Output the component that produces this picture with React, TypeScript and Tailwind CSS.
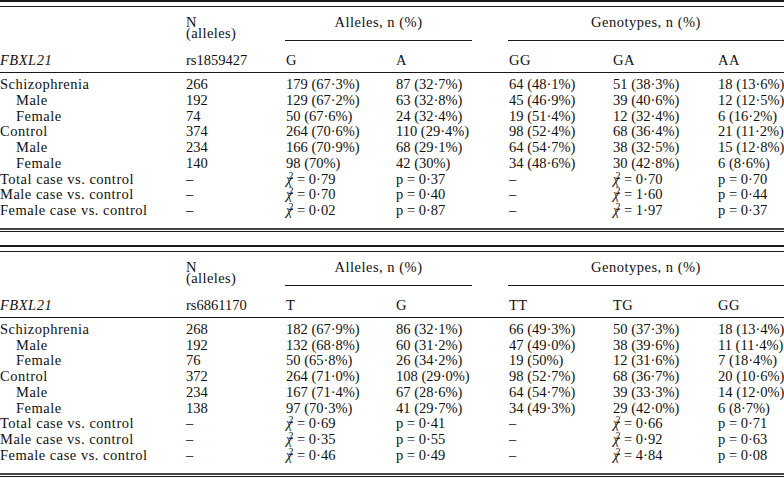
import React from "react";

type Cell = string | { chi: string };
type Row = { label: string; indent?: boolean; cells: Cell[] };

const GRID = "grid grid-cols-[186px_100px_110px_113px_104px_105px_1fr]";

function Chi({ v }: { v: string }) {
  return (
    <span>
      <span className="italic">χ</span>
      <sup className="-ml-[4px] text-[10px]">2</sup>
      <span> = {v}</span>
    </span>
  );
}

function renderCell(c: Cell) {
  if (typeof c === "string") return c;
  return <Chi v={c.chi} />;
}

function Table({
  snp,
  alleles,
  genos,
  rows,
}: {
  snp: string;
  alleles: [string, string];
  genos: [string, string, string];
  rows: Row[];
}) {
  return (
    <div className="w-[784px]">
      <div className="h-[2px] bg-[#1a1a1a]" />
      <div className="h-[4px]" />
      <div className="h-[1px] bg-[#1a1a1a]" />
      {/* header */}
      <div className="flex h-[65px]">
        <div className="flex w-[186px] flex-col justify-end pb-[3px] italic tracking-[0.5px]">FBXL21</div>
        <div className="flex flex-1 flex-col justify-between">
          <div className="flex items-start pt-[8px] tracking-[0.5px]">
            <div className="w-[100px]">
              <div>N</div>
              <div className="-mt-[5px] tracking-[0.4px]">(alleles)</div>
            </div>
            <div className="w-[223px]">
              <div className="mr-[37px] -ml-[1px] border-b border-[#1a1a1a] pb-[9px] text-center">
                Alleles, n (%)
              </div>
            </div>
            <div className="flex-1">
              <div className="-ml-[1px] border-b border-[#1a1a1a] pb-[9px] text-center">
                Genotypes, n (%)
              </div>
            </div>
          </div>
          <div className="grid grid-cols-[100px_110px_113px_104px_105px_1fr] pb-[3px] tracking-[0.5px]">
            <div className="tracking-normal">{snp}</div>
            <div>{alleles[0]}</div>
            <div>{alleles[1]}</div>
            <div>{genos[0]}</div>
            <div>{genos[1]}</div>
            <div>{genos[2]}</div>
          </div>
        </div>
      </div>
      <div className="h-[1px] bg-[#1a1a1a]" />
      {/* body */}
      <div className="pt-[4px] pb-[9px]">
        {rows.map((r, i) => (
          <div key={i} className={`${GRID} whitespace-nowrap`}>
            <div className={`tracking-[0.5px] ${r.indent ? "pl-[16px]" : ""}`}>{r.label}</div>
            {r.cells.map((c, j) => (
              <div key={j}>{renderCell(c)}</div>
            ))}
          </div>
        ))}
      </div>
      <div className="h-[2px] bg-[#444]" />
      <div className="h-[1px]" />
      <div className="h-[1px] bg-[#1a1a1a]" />
    </div>
  );
}

const rows1: Row[] = [
  { label: "Schizophrenia", cells: ["266", "179 (67·3%)", "87 (32·7%)", "64 (48·1%)", "51 (38·3%)", "18 (13·6%)"] },
  { label: "Male", indent: true, cells: ["192", "129 (67·2%)", "63 (32·8%)", "45 (46·9%)", "39 (40·6%)", "12 (12·5%)"] },
  { label: "Female", indent: true, cells: ["74", "50 (67·6%)", "24 (32·4%)", "19 (51·4%)", "12 (32·4%)", "6 (16·2%)"] },
  { label: "Control", cells: ["374", "264 (70·6%)", "110 (29·4%)", "98 (52·4%)", "68 (36·4%)", "21 (11·2%)"] },
  { label: "Male", indent: true, cells: ["234", "166 (70·9%)", "68 (29·1%)", "64 (54·7%)", "38 (32·5%)", "15 (12·8%)"] },
  { label: "Female", indent: true, cells: ["140", "98 (70%)", "42 (30%)", "34 (48·6%)", "30 (42·8%)", "6 (8·6%)"] },
  { label: "Total case vs. control", cells: ["–", { chi: "0·79" }, "p = 0·37", "–", { chi: "0·70" }, "p = 0·70"] },
  { label: "Male case vs. control", cells: ["–", { chi: "0·70" }, "p = 0·40", "–", { chi: "1·60" }, "p = 0·44"] },
  { label: "Female case vs. control", cells: ["–", { chi: "0·02" }, "p = 0·87", "–", { chi: "1·97" }, "p = 0·37"] },
];

const rows2: Row[] = [
  { label: "Schizophrenia", cells: ["268", "182 (67·9%)", "86 (32·1%)", "66 (49·3%)", "50 (37·3%)", "18 (13·4%)"] },
  { label: "Male", indent: true, cells: ["192", "132 (68·8%)", "60 (31·2%)", "47 (49·0%)", "38 (39·6%)", "11 (11·4%)"] },
  { label: "Female", indent: true, cells: ["76", "50 (65·8%)", "26 (34·2%)", "19 (50%)", "12 (31·6%)", "7 (18·4%)"] },
  { label: "Control", cells: ["372", "264 (71·0%)", "108 (29·0%)", "98 (52·7%)", "68 (36·7%)", "20 (10·6%)"] },
  { label: "Male", indent: true, cells: ["234", "167 (71·4%)", "67 (28·6%)", "64 (54·7%)", "39 (33·3%)", "14 (12·0%)"] },
  { label: "Female", indent: true, cells: ["138", "97 (70·3%)", "41 (29·7%)", "34 (49·3%)", "29 (42·0%)", "6 (8·7%)"] },
  { label: "Total case vs. control", cells: ["–", { chi: "0·69" }, "p = 0·41", "–", { chi: "0·66" }, "p = 0·71"] },
  { label: "Male case vs. control", cells: ["–", { chi: "0·35" }, "p = 0·55", "–", { chi: "0·92" }, "p = 0·63"] },
  { label: "Female case vs. control", cells: ["–", { chi: "0·46" }, "p = 0·49", "–", { chi: "4·84" }, "p = 0·08"] },
];

export default function App() {
  return (
    <div className="flex h-[484px] w-[784px] flex-col gap-[13px] bg-white font-['Liberation_Serif',serif] text-[14.5px] leading-[15.75px] text-[#111]">
      <Table snp="rs1859427" alleles={["G", "A"]} genos={["GG", "GA", "AA"]} rows={rows1} />
      <Table snp="rs6861170" alleles={["T", "G"]} genos={["TT", "TG", "GG"]} rows={rows2} />
    </div>
  );
}
